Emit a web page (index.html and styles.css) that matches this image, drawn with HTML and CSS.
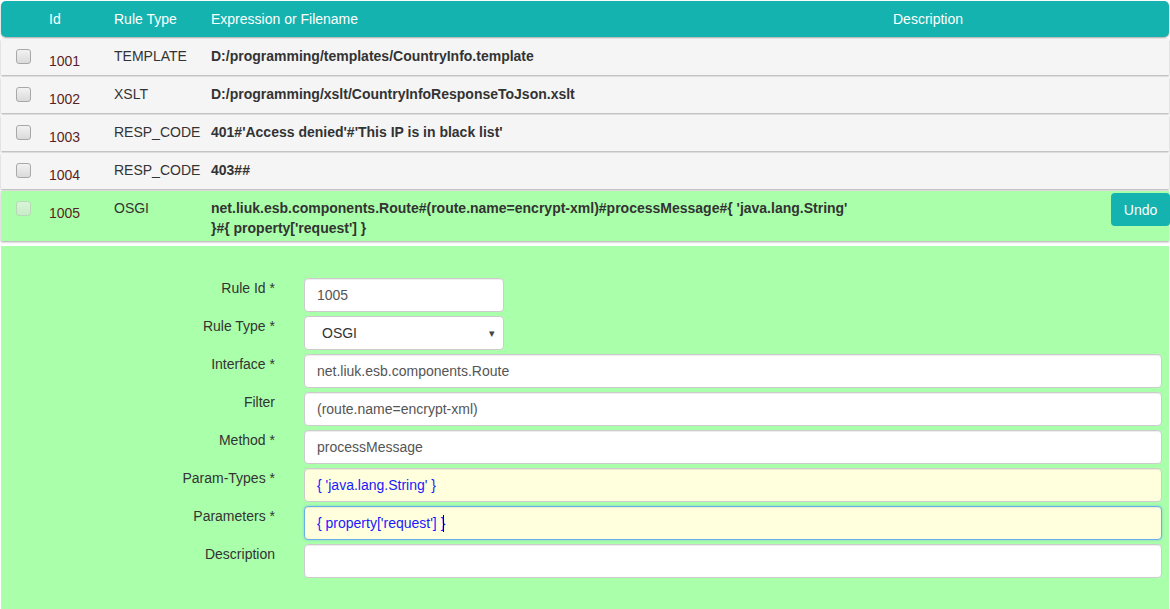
FILE: index.html
```html
<!DOCTYPE html>
<html>
<head>
<meta charset="utf-8">
<title>Rules</title>
<link rel="stylesheet" href="styles.css">
</head>
<body>
<div class="page">
  <div class="thead grid">
    <div class="c-check"></div>
    <div class="c-id">Id</div>
    <div class="c-type">Rule Type</div>
    <div class="c-expr">Expression or Filename</div>
    <div class="c-desc">Description</div>
    <div class="c-act"></div>
  </div>

  <div class="row grid">
    <div class="c-check"><span class="cb"></span></div>
    <div class="c-id">1001</div>
    <div class="c-type">TEMPLATE</div>
    <div class="c-expr">D:/programming/templates/CountryInfo.template</div>
    <div class="c-desc"></div>
    <div class="c-act"></div>
  </div>

  <div class="row grid">
    <div class="c-check"><span class="cb"></span></div>
    <div class="c-id">1002</div>
    <div class="c-type">XSLT</div>
    <div class="c-expr">D:/programming/xslt/CountryInfoResponseToJson.xslt</div>
    <div class="c-desc"></div>
    <div class="c-act"></div>
  </div>

  <div class="row grid">
    <div class="c-check"><span class="cb"></span></div>
    <div class="c-id">1003</div>
    <div class="c-type">RESP_CODE</div>
    <div class="c-expr">401#'Access denied'#'This IP is in black list'</div>
    <div class="c-desc"></div>
    <div class="c-act"></div>
  </div>

  <div class="row grid">
    <div class="c-check"><span class="cb"></span></div>
    <div class="c-id">1004</div>
    <div class="c-type">RESP_CODE</div>
    <div class="c-expr">403##</div>
    <div class="c-desc"></div>
    <div class="c-act"></div>
  </div>

  <div class="row grid editing">
    <div class="c-check"><span class="cb disabled"></span></div>
    <div class="c-id">1005</div>
    <div class="c-type">OSGI</div>
    <div class="c-expr">net.liuk.esb.components.Route#(route.name=encrypt-xml)#processMessage#{ 'java.lang.String' }#{ property['request'] }</div>
    <div class="c-desc"></div>
    <div class="c-act"><button class="btn" type="button">Undo</button></div>
  </div>

  <form class="editor">
    <div class="field">
      <label>Rule Id *</label>
      <input class="ctl short" type="text" value="1005">
    </div>
    <div class="field">
      <label>Rule Type *</label>
      <div class="select short">
        <span class="select-val">OSGI</span>
        <span class="arrow">&#9662;</span>
      </div>
    </div>
    <div class="field">
      <label>Interface *</label>
      <input class="ctl" type="text" value="net.liuk.esb.components.Route">
    </div>
    <div class="field">
      <label>Filter</label>
      <input class="ctl" type="text" value="(route.name=encrypt-xml)">
    </div>
    <div class="field">
      <label>Method *</label>
      <input class="ctl" type="text" value="processMessage">
    </div>
    <div class="field">
      <label>Param-Types *</label>
      <input class="ctl code" type="text" value="{ 'java.lang.String' }">
    </div>
    <div class="field">
      <label>Parameters *</label>
      <div class="ctl code focus"><span>{ property['request'] }</span><span class="caret"></span></div>
    </div>
    <div class="field">
      <label>Description</label>
      <input class="ctl" type="text" value="">
    </div>
  </form>
</div>
</body>
</html>
```

FILE: styles.css
```css
html, body {
  margin: 0;
  padding: 0;
  background: #ffffff;
}
body {
  font-family: "Liberation Sans", Arial, sans-serif;
  font-size: 14px;
  line-height: 20px;
  color: #333;
}
.page {
  padding: 1px 1px 0 1px;
}
.grid {
  display: grid;
  grid-template-columns: 40px 65px 97px 666px 118px 1fr;
}
.grid > div {
  padding-left: 8px;
  box-sizing: border-box;
}
.thead {
  height: 36px;
  background: #14b3af;
  color: #fff;
  border-radius: 5px;
  box-shadow: 0 1px 2px rgba(0,0,0,0.35);
  align-items: center;
}
.thead .c-desc {
  text-align: center;
  padding-left: 0;
}
.row {
  margin-top: 2px;
  background: #f5f5f5;
  min-height: 36px;
  box-shadow: 0 1px 2px rgba(0,0,0,0.35);
}
.row > div {
  padding-top: 7px;
  padding-bottom: 3px;
}
.row .c-check {
  padding-left: 15px;
  padding-top: 10px;
}
.row .c-id {
  padding-top: 12px;
  color: #5a1f1f;
}
.row .c-expr {
  font-weight: bold;
  padding-right: 8px;
}
.row .c-act {
  padding-top: 2px;
  padding-bottom: 0;
  display: flex;
  justify-content: flex-end;
}
.cb {
  display: block;
  width: 15px;
  height: 15px;
  box-sizing: border-box;
  border: 1px solid #a8a8a8;
  border-radius: 3px;
  background: linear-gradient(#f2f2f2, #dadada);
}
.cb.disabled {
  border-color: #b8d8b8;
  background: linear-gradient(#d8f4d8, #c8ecc8);
}
.editing {
  background: #aaffaa;
  min-height: 50px;
}
.btn {
  font-family: "Liberation Sans", Arial, sans-serif;
  font-size: 14px;
  color: #fff;
  background: #14b3af;
  border: none;
  border-radius: 4px;
  width: 59px;
  height: 33px;
  padding: 0;
  margin-right: -1px;
}
.editor {
  margin-top: 5px;
  background: #aaffaa;
  padding: 32px 7px 32px 0;
}
.field {
  display: flex;
  gap: 29px;
  margin-bottom: 4px;
}
.field label {
  width: 274px;
  flex: none;
  text-align: right;
  line-height: 20px;
  color: #333;
}
.ctl {
  flex: 1;
  height: 34px;
  box-sizing: border-box;
  border: 1px solid #cccccc;
  border-radius: 4px;
  background: #fff;
  padding: 6px 12px;
  font-family: "Liberation Sans", Arial, sans-serif;
  font-size: 14px;
  line-height: 20px;
  color: #555;
  box-shadow: inset 0 1px 1px rgba(0,0,0,0.075);
  outline: none;
  margin: 0;
}
.short {
  flex: none;
  width: 200px;
}
.select {
  height: 34px;
  box-sizing: border-box;
  border: 1px solid #cccccc;
  border-radius: 4px;
  background: #fff;
  padding: 6px 8px 6px 17px;
  color: #333;
  display: flex;
  justify-content: space-between;
  align-items: center;
}
.select .arrow {
  font-size: 11px;
  color: #444;
}
.code {
  background: #ffffdd;
  color: #1a1aff;
}
.focus {
  border-color: #66afe9;
  box-shadow: inset 0 1px 1px rgba(0,0,0,0.075), 0 0 3px rgba(102,175,233,0.6);
  display: flex;
  align-items: center;
}
.caret {
  display: inline-block;
  width: 1px;
  height: 17px;
  background: #000;
  margin-left: -2px;
}
```
